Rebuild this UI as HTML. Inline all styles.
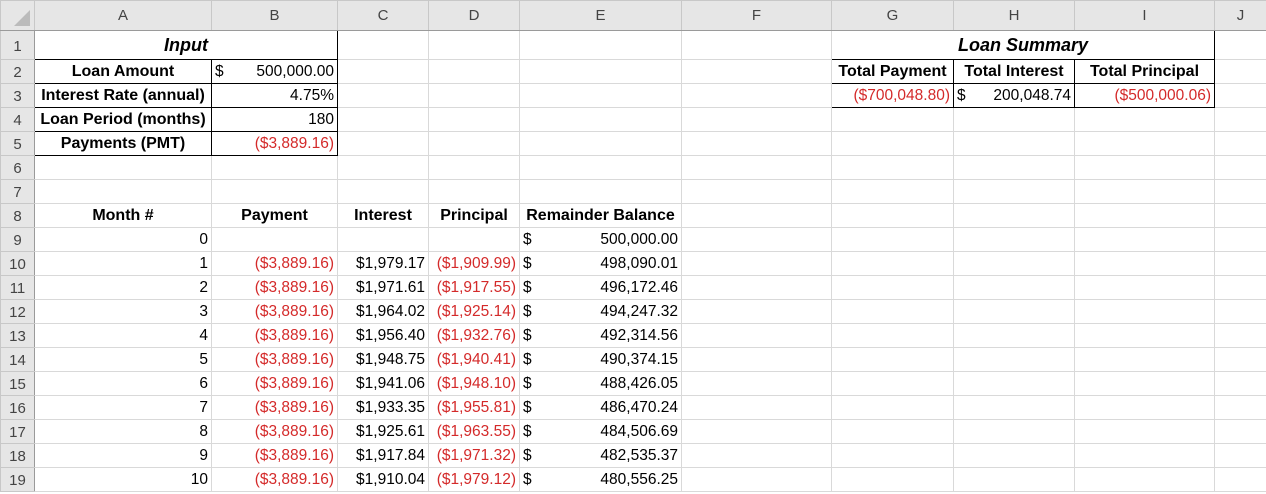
<!DOCTYPE html>
<html><head><meta charset="utf-8"><style>
body{margin:0;background:#fff;width:1266px;height:494px;overflow:hidden;font-family:"Liberation Sans",Arial,sans-serif;}
table{border-collapse:collapse;table-layout:fixed;width:1266px;}
td{border:1px solid #d9d9d9;height:24px;padding:0 3px;font-size:15.5px;line-height:17px;color:#000;white-space:nowrap;overflow:hidden;box-sizing:border-box;vertical-align:middle;}
tr.h td{background:#e6e6e6;color:#444;text-align:center;font-size:15px;height:30px;border-color:#c8c8c8;border-bottom:1px solid #9a9a9a;}
td.rh{background:#e6e6e6;color:#444;text-align:center;padding:2px 0 0;font-size:15px;border-color:#c8c8c8;border-right:1px solid #9a9a9a;}
.b{font-weight:bold;font-size:16px;}
.c{text-align:center;}
.r{text-align:right;}
.red{color:#d42a2a;}
.t{font-weight:bold;font-style:italic;font-size:18px;text-align:center;}
.k{border:1px solid #000;}
.d span{float:left}
</style></head><body>
<table>
<colgroup><col style="width:34px"><col style="width:177px"><col style="width:126px"><col style="width:91px"><col style="width:91px"><col style="width:162px"><col style="width:150px"><col style="width:122px"><col style="width:121px"><col style="width:140px"><col style="width:52px"></colgroup>
<tr class="h"><td style="padding:0;position:relative"><svg width="30" height="20" style="display:block;position:absolute;right:2px;bottom:2px"><polygon points="28,2 28,18 12,18" fill="#bbb"/></svg></td><td>A</td><td>B</td><td>C</td><td>D</td><td>E</td><td>F</td><td>G</td><td>H</td><td>I</td><td>J</td></tr>
<tr><td class="rh" style="height:29px">1</td><td colspan="2" class="t k">Input</td><td></td><td></td><td></td><td></td><td colspan="3" class="t k">Loan Summary</td><td></td></tr>
<tr><td class="rh">2</td><td class="b c k">Loan Amount</td><td class="k d r"><span>$</span>500,000.00</td><td></td><td></td><td></td><td></td><td class="b c k">Total Payment</td><td class="b c k">Total Interest</td><td class="b c k">Total Principal</td><td></td></tr>
<tr><td class="rh">3</td><td class="b c k">Interest Rate (annual)</td><td class="k r">4.75%</td><td></td><td></td><td></td><td></td><td class="k r red">($700,048.80)</td><td class="k d r"><span>$</span>200,048.74</td><td class="k r red">($500,000.06)</td><td></td></tr>
<tr><td class="rh">4</td><td class="b c k">Loan Period (months)</td><td class="k r">180</td><td></td><td></td><td></td><td></td><td></td><td></td><td></td><td></td></tr>
<tr><td class="rh">5</td><td class="b c k">Payments (PMT)</td><td class="k r red">($3,889.16)</td><td></td><td></td><td></td><td></td><td></td><td></td><td></td><td></td></tr>
<tr><td class="rh">6</td><td></td><td></td><td></td><td></td><td></td><td></td><td></td><td></td><td></td><td></td></tr>
<tr><td class="rh">7</td><td></td><td></td><td></td><td></td><td></td><td></td><td></td><td></td><td></td><td></td></tr>
<tr><td class="rh">8</td><td class="b c">Month #</td><td class="b c">Payment</td><td class="b c">Interest</td><td class="b c">Principal</td><td class="b c">Remainder Balance</td><td></td><td></td><td></td><td></td><td></td></tr>
<tr><td class="rh">9</td><td class="r">0</td><td></td><td></td><td></td><td class="d r"><span>$</span>500,000.00</td><td></td><td></td><td></td><td></td><td></td></tr>
<tr><td class="rh">10</td><td class="r">1</td><td class="r red">($3,889.16)</td><td class="r">$1,979.17</td><td class="r red">($1,909.99)</td><td class="d r"><span>$</span>498,090.01</td><td></td><td></td><td></td><td></td><td></td></tr>
<tr><td class="rh">11</td><td class="r">2</td><td class="r red">($3,889.16)</td><td class="r">$1,971.61</td><td class="r red">($1,917.55)</td><td class="d r"><span>$</span>496,172.46</td><td></td><td></td><td></td><td></td><td></td></tr>
<tr><td class="rh">12</td><td class="r">3</td><td class="r red">($3,889.16)</td><td class="r">$1,964.02</td><td class="r red">($1,925.14)</td><td class="d r"><span>$</span>494,247.32</td><td></td><td></td><td></td><td></td><td></td></tr>
<tr><td class="rh">13</td><td class="r">4</td><td class="r red">($3,889.16)</td><td class="r">$1,956.40</td><td class="r red">($1,932.76)</td><td class="d r"><span>$</span>492,314.56</td><td></td><td></td><td></td><td></td><td></td></tr>
<tr><td class="rh">14</td><td class="r">5</td><td class="r red">($3,889.16)</td><td class="r">$1,948.75</td><td class="r red">($1,940.41)</td><td class="d r"><span>$</span>490,374.15</td><td></td><td></td><td></td><td></td><td></td></tr>
<tr><td class="rh">15</td><td class="r">6</td><td class="r red">($3,889.16)</td><td class="r">$1,941.06</td><td class="r red">($1,948.10)</td><td class="d r"><span>$</span>488,426.05</td><td></td><td></td><td></td><td></td><td></td></tr>
<tr><td class="rh">16</td><td class="r">7</td><td class="r red">($3,889.16)</td><td class="r">$1,933.35</td><td class="r red">($1,955.81)</td><td class="d r"><span>$</span>486,470.24</td><td></td><td></td><td></td><td></td><td></td></tr>
<tr><td class="rh">17</td><td class="r">8</td><td class="r red">($3,889.16)</td><td class="r">$1,925.61</td><td class="r red">($1,963.55)</td><td class="d r"><span>$</span>484,506.69</td><td></td><td></td><td></td><td></td><td></td></tr>
<tr><td class="rh">18</td><td class="r">9</td><td class="r red">($3,889.16)</td><td class="r">$1,917.84</td><td class="r red">($1,971.32)</td><td class="d r"><span>$</span>482,535.37</td><td></td><td></td><td></td><td></td><td></td></tr>
<tr><td class="rh">19</td><td class="r">10</td><td class="r red">($3,889.16)</td><td class="r">$1,910.04</td><td class="r red">($1,979.12)</td><td class="d r"><span>$</span>480,556.25</td><td></td><td></td><td></td><td></td><td></td></tr>
</table>
</body></html>
